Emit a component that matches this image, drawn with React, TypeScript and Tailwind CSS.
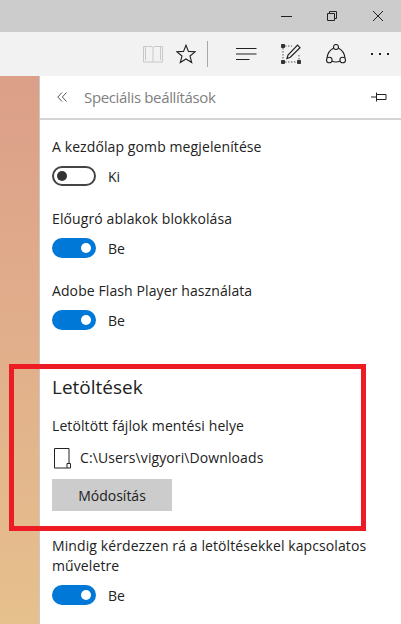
const FONT = "font-['Open_Sans','Noto_Sans',sans-serif]";

function Toggle({ on }: { on: boolean }) {
  return (
    <div className="flex items-center gap-3 h-5 mt-[9px]">
      {on ? (
        <div className="w-11 h-5 rounded-full bg-[#0078d7] flex items-center justify-end pr-[5px]">
          <div className="w-[10px] h-[10px] rounded-full bg-white" />
        </div>
      ) : (
        <div className="w-11 h-5 rounded-full border-2 border-[#444] flex items-center pl-[3px]">
          <div className="w-[10px] h-[10px] rounded-full bg-[#333]" />
        </div>
      )}
      <span className="pt-[2px] text-[14px] leading-5 text-[#222]">{on ? "Be" : "Ki"}</span>
    </div>
  );
}

function Setting({ label, on }: { label: React.ReactNode; on: boolean }) {
  return (
    <div className="pb-[23px]">
      <div className="text-[14px] leading-5 text-[#222] tracking-[0.1px]">{label}</div>
      <Toggle on={on} />
    </div>
  );
}

function ToolbarIcons() {
  return (
    <div className="h-11 bg-[#f2f2f2] flex items-center justify-end">
      {/* reading view */}
      <svg width="20" height="18" viewBox="0 0 20 18" fill="none" stroke="#c8c8c8" strokeWidth="1" className="mr-[13px]">
        <path d="M.5 1.500h7.500c1 0 1.600.3 2 1 .4-.7 1-1 2-1h7.500v15.500H.5zM10 2.500v14.500M2.500 1.500v13.500M17.500 1.500v13.500" />
      </svg>
      {/* favorite */}
      <svg width="20" height="20" viewBox="0 0 20 20" fill="none" stroke="#222" strokeWidth="1.1" className="mr-[11px]">
        <path d="M10 1.200l2.500 6.200 6.700.4-5.200 4.200 1.700 6.500L10 15l-5.700 3.500L6 12 .8 7.800l6.700-.4z" />
      </svg>
      <div className="w-px h-[26px] bg-[#a8a8a8] mr-7" />
      {/* hub */}
      <svg width="21" height="14" viewBox="0 0 21 14" fill="none" stroke="#222" strokeWidth="1.2" className="mr-[24px]">
        <path d="M0 1.500h20.500M0 7h20.500M0 12.500h13.500" />
      </svg>
      {/* web note */}
      <svg width="20" height="20" viewBox="0 0 20 20" fill="none" className="mr-[25px]">
        <path d="M2 4v12M4 2h7M18 11v5M4 18h12" stroke="#555" strokeWidth="1" strokeDasharray="1.5 1.5" />
        <path d="M0.5 0.5h3v3h-3zM0.5 16.500h3v3h-3zM16.500 16.500h3v3h-3z" fill="#333" stroke="#333" strokeWidth="1" />
        <path d="M6 14.500l1-3.500L16.500 1.200l2.500 2.500L9.300 13.200z" stroke="#222" strokeWidth="1.2" />
      </svg>
      {/* share */}
      <svg width="20" height="20" viewBox="0 0 20 20" fill="none" stroke="#222" strokeWidth="1.1" className="mr-[25px]">
        <circle cx="10" cy="3" r="2.500" />
        <circle cx="3.300" cy="16" r="2.800" />
        <circle cx="16.700" cy="16" r="2.800" />
        <path d="M7.700 4C3.800 6 1.400 9.500 1.100 14M12.300 4c3.900 2 6.300 5.500 6.600 10M6.100 17.200c2.600 1 5.200 1 7.800 0" />
      </svg>
      {/* more */}
      <div className="flex gap-[6px] mr-3">
        <div className="w-[2px] h-[2px] bg-[#222]" />
        <div className="w-[2px] h-[2px] bg-[#222]" />
        <div className="w-[2px] h-[2px] bg-[#222]" />
      </div>
    </div>
  );
}

export default function App() {
  return (
    <div className={`relative w-[401px] h-[624px] overflow-hidden bg-white ${FONT}`}>
      {/* window title bar */}
      <div className="h-8 bg-[#cccccc] flex items-center justify-end">
        <svg width="11" height="1" viewBox="0 0 11 1" className="mr-[35px]">
          <path d="M0 .5h11" stroke="#222" />
        </svg>
        <svg width="10" height="10" viewBox="0 0 10 10" fill="none" stroke="#222" className="mr-[36px]">
          <path d="M.5 2.500h7v7h-7zM2.500 2.500v-2h7v7h-2" />
        </svg>
        <svg width="10" height="10" viewBox="0 0 10 10" fill="none" stroke="#222" className="mr-[18px]">
          <path d="M0 0l10 10M10 0L0 10" />
        </svg>
      </div>
      <ToolbarIcons />
      <div className="flex h-[548px]">
        {/* page behind the panel */}
        <div className="w-[39px] bg-gradient-to-b from-[#dc9f89] to-[#e6c08d]" />
        <div className="flex-1 border-l border-[#c8c8c8]">
          <div className="h-11 border-b-2 border-[#d4d4d4] flex items-center pl-[17px] pr-[14px]">
            <svg width="10" height="10" viewBox="0 0 10 10" fill="none" stroke="#555" strokeWidth="1">
              <path d="M5 .5L.8 5 5 9.500M9.500 .5L5.300 5l4.200 4.500" />
            </svg>
            <span className="ml-[17px] text-[15px] leading-5 text-[#808080] tracking-[-0.35px]">Speciális beállítások</span>
            <svg width="16" height="10" viewBox="0 0 16 10" fill="none" stroke="#222" className="ml-auto">
              <path d="M0 5h5.500M5.500 .5v9M5.500 2.500h9.500v5H5.500" />
            </svg>
          </div>
          <div className="pl-3 pt-[17px]">
            <Setting label="A kezdőlap gomb megjelenítése" on={false} />
            <Setting label="Előugró ablakok blokkolása" on />
            <Setting label="Adobe Flash Player használata" on />
            <div className="pt-[20px] text-[19px] leading-7 text-[#222]">Letöltések</div>
            <div className="mt-[15px] text-[14px] leading-5 text-[#222] tracking-[0.1px]">Letöltött fájlok mentési helye</div>
            <div className="mt-[11px] h-[22px] flex items-center pl-[2px]">
              <svg width="17" height="21" viewBox="0 0 17 21" fill="none" stroke="#222" strokeWidth="1">
                <path d="M.5.5h14.500v15M.5.5v19.500h12.500M13 20v-4.500h3.500v4.500z" />
              </svg>
              <span className="ml-[9px] text-[14px] leading-5 text-[#222] tracking-[0.1px]">C:\Users\vigyori\Downloads</span>
            </div>
            <button className="block mt-[10px] w-[120px] h-8 bg-[#cccccc] text-[14px] text-[#222]">Módosítás</button>
            <div className="mt-[25px]">
              <Setting
                label={
                  <>
                    Mindig kérdezzen rá a letöltésekkel kapcsolatos
                    <br />
                    műveletre
                  </>
                }
                on
              />
            </div>
          </div>
        </div>
      </div>
      {/* red highlight drawn over the screenshot */}
      <div className="absolute left-[9px] top-[364px] w-[357px] h-[167px] border-[5px] border-[#ed1c24] pointer-events-none" />
    </div>
  );
}
